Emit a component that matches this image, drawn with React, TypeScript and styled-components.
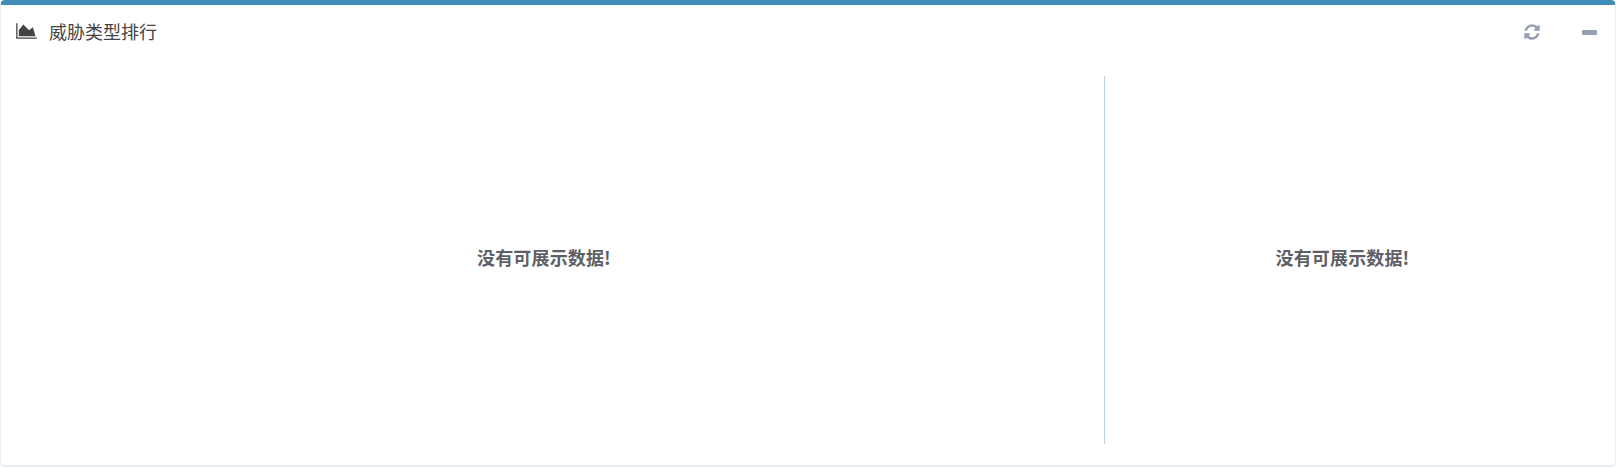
import React from "react";
import styled, { createGlobalStyle } from "styled-components";

const Global = createGlobalStyle`
  html, body { margin: 0; padding: 0; background: #fff; }
  body { font-family: "Noto Sans CJK SC", "Liberation Sans", sans-serif; }
`;

const Card = styled.section`
  box-sizing: border-box;
  width: 1616px;
  height: 467px;
  display: flex;
  flex-direction: column;
  background: #fff;
  border: 1px solid #e8edf0;
  border-bottom-width: 2px;
  border-top: 5px solid #418dba;
  border-radius: 5px;
`;

const Header = styled.header`
  height: 54px;
  display: flex;
  align-items: center;
  justify-content: space-between;
  padding: 0 18px 2px 15px;
  box-sizing: border-box;
`;

const Title = styled.h3`
  margin: 0;
  display: flex;
  align-items: center;
  gap: 12px;
  font-size: 18px;
  line-height: 26px;
  font-weight: 400;
  color: #444;
`;

const Tools = styled.div`
  display: flex;
  align-items: center;
  gap: 41px;
  padding-top: 2px;
  color: #97a0b3;
`;

const Body = styled.div`
  flex: 1;
  display: grid;
  grid-template-columns: 1104px 1fr;
  padding: 17px 0 21px;
`;

const Pane = styled.div<{ $divided?: boolean; $offset: number }>`
  display: flex;
  align-items: center;
  justify-content: center;
  padding-bottom: 6px;
  padding-right: ${(p) => p.$offset}px;
  ${(p) => (p.$divided ? "border-right: 1px solid #bcd0de;" : "")}
`;

const Empty = styled.p`
  margin: 0;
  font-size: 18px;
  font-weight: 700;
  line-height: 26px;
  letter-spacing: 0.15px;
  color: #5f5f67;
`;

const AreaIcon = () => (
  <svg width="21" height="18" viewBox="0 0 2048 1792" fill="currentColor">
    <path d="M2048 1536v128H0V128h128v1408h1920zM1664 512l256 896H256V832l448-576 576 576z" />
  </svg>
);

const RefreshIcon = () => (
  <svg width="18" height="18" viewBox="0 0 1792 1792" fill="currentColor">
    <path d="M1639 1056q0 5-1 7-64 268-268 434.5t-478 166.5q-146 0-282.5-55t-243.5-157l-129 129q-19 19-45 19t-45-19-19-45v-448q0-26 19-45t45-19h448q26 0 45 19t19 45-19 45l-137 137q71 66 161 102t187 36q134 0 250-65t186-179q11-17 53-117 8-23 30-23h192q13 0 22.5 9.5t9.5 22.5zm25-800v448q0 26-19 45t-45 19h-448q-26 0-45-19t-19-45 19-45l138-138q-148-137-349-137-134 0-250 65t-186 179q-11 17-53 117-8 23-30 23h-199q-13 0-22.5-9.5t-9.5-22.5v-7q65-268 270-434.5t480-166.5q146 0 284 55.5t245 156.5l130-129q19-19 45-19t45 19 19 45z" />
  </svg>
);

const MinusBar = styled.span`
  display: block;
  width: 15px;
  height: 5px;
  border-radius: 1px;
  background: currentColor;
`;

export default function App() {
  return (
    <>
      <Global />
      <Card>
        <Header>
          <Title>
            <AreaIcon />
            威胁类型排行
          </Title>
          <Tools>
            <RefreshIcon />
            <MinusBar />
          </Tools>
        </Header>
        <Body>
          <Pane $divided $offset={17}>
            <Empty>没有可展示数据!</Empty>
          </Pane>
          <Pane $offset={35}>
            <Empty>没有可展示数据!</Empty>
          </Pane>
        </Body>
      </Card>
    </>
  );
}
